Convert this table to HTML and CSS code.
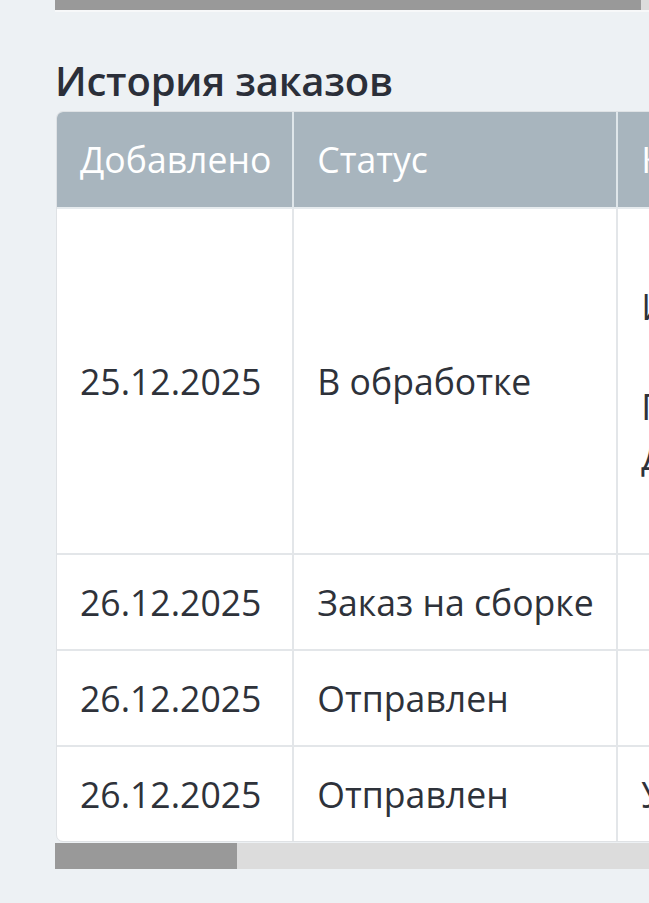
FILE: index.html
```html
<!DOCTYPE html>
<html lang="ru">
<head>
<meta charset="utf-8">
<link rel="stylesheet" href="styles.css">
</head>
<body>
<div class="page">
  <div class="scrollbar top-bar"><div class="thumb top-thumb"></div></div>
  <h2 class="title">История заказов</h2>
  <div class="table-wrap">
    <table class="history">
      <thead>
        <tr>
          <th class="c-date">Добавлено</th>
          <th class="c-status">Статус</th>
          <th class="c-comment">Комментарий</th>
          <th class="c-extra">Уведомление</th>
        </tr>
      </thead>
      <tbody>
        <tr>
          <td>25.12.2025</td>
          <td>В обработке</td>
          <td>Интернет-магазин<br>&nbsp;<br>Пункт выдачи<br>Доставка</td>
          <td>Нет<br>&nbsp;<br>&nbsp;<br>&nbsp;<br>&nbsp;<br>&nbsp;</td>
        </tr>
        <tr>
          <td>26.12.2025</td>
          <td>Заказ на сборке</td>
          <td></td>
          <td>Нет</td>
        </tr>
        <tr>
          <td>26.12.2025</td>
          <td>Отправлен</td>
          <td></td>
          <td>Нет</td>
        </tr>
        <tr>
          <td>26.12.2025</td>
          <td>Отправлен</td>
          <td>Убедитесь</td>
          <td>Да</td>
        </tr>
      </tbody>
    </table>
  </div>
  <div class="scrollbar bottom-bar"><div class="thumb bottom-thumb"></div></div>
</div>
</body>
</html>
```
FILE: styles.css
```css
html, body {
  margin: 0;
  padding: 0;
  background: #edf1f4;
  overflow: hidden;
}
body {
  width: 649px;
  height: 903px;
  font-family: "Open Sans", "Noto Sans", sans-serif;
  color: #2e323a;
}
.page {
  padding-left: 55px;
  width: 1400px;
}
.scrollbar {
  background: #dcdcdc;
}
.thumb {
  background: #999999;
  height: 100%;
}
.top-bar {
  height: 10px;
  width: 1400px;
  border-bottom: 2px solid #f7f8f9;
}
.top-thumb {
  width: 586px;
}
.title {
  margin: 45px 0 6px 0;
  font-size: 40px;
  font-weight: 600;
  line-height: 48px;
  letter-spacing: -0.2px;
  color: #2b2f39;
}
.table-wrap {
  width: 1300px;
  padding-left: 1px;
}
.history {
  border-collapse: separate;
  border-spacing: 0;
  font-size: 35.6px;
  line-height: 50px;
  background: #ffffff;
  border: 1px solid #dfe2e5;
  border-radius: 7px;
  overflow: hidden;
}
.history th, .history td {
  text-align: left;
  vertical-align: middle;
  padding: 22px 21px 22px 23px;
  white-space: nowrap;
  border-right: 2px solid #e3e6e9;
  border-bottom: 2px solid #e3e6e9;
}
.history thead th {
  padding-bottom: 23px;
}
.history tbody tr:last-child td {
  border-bottom: 0;
}
.history th {
  background: #a8b5be;
  color: #ffffff;
  font-weight: 400;
  border-right-color: #dfe6ea;
  border-bottom-color: #e6ebee;
}
.c-date { width: 188px; }
.c-status { width: 278px; }
.c-comment { width: 340px; }
.bottom-bar {
  height: 26px;
  width: 1400px;
  margin-top: 1px;
}
.bottom-thumb {
  width: 182px;
}
```
